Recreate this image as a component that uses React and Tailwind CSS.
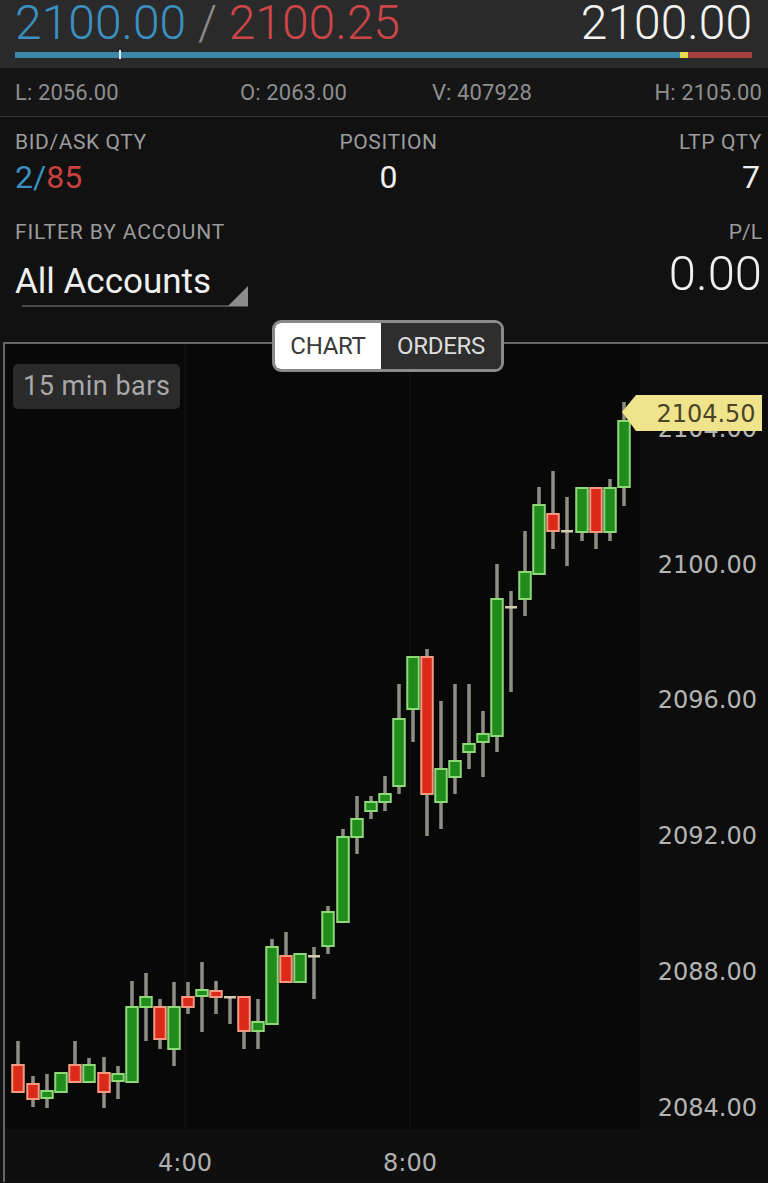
import React from "react";

// [x, bodyTop, bodyBottom, wickTop, wickBottom, type]  g = up, r = down, d = doji
const candles = [
  [18, 1066, 1093, 1042, 1093, "r"],
  [33, 1085, 1100, 1077, 1108, "r"],
  [47, 1092, 1099, 1075, 1109, "g"],
  [61, 1074, 1093, 1074, 1093, "g"],
  [75, 1066, 1083, 1042, 1083, "r"],
  [89, 1066, 1083, 1059, 1083, "g"],
  [104, 1074, 1093, 1058, 1109, "r"],
  [118, 1075, 1082, 1067, 1100, "g"],
  [132, 1008, 1083, 982, 1083, "g"],
  [146, 998, 1008, 974, 1042, "g"],
  [160, 1008, 1040, 1000, 1050, "r"],
  [174, 1008, 1050, 983, 1067, "g"],
  [188, 998, 1008, 983, 1015, "r"],
  [202, 991, 997, 963, 1033, "g"],
  [216, 992, 998, 982, 1015, "r"],
  [230, 998, 998, 997, 1025, "d"],
  [244, 998, 1032, 997, 1050, "r"],
  [258, 1023, 1032, 1000, 1050, "g"],
  [272, 948, 1025, 940, 1025, "g"],
  [286, 957, 983, 933, 983, "r"],
  [300, 955, 983, 955, 983, "g"],
  [314, 957, 957, 948, 1000, "d"],
  [328, 913, 947, 907, 955, "g"],
  [343, 838, 923, 830, 923, "g"],
  [357, 820, 838, 797, 855, "g"],
  [371, 803, 812, 797, 820, "g"],
  [385, 795, 803, 777, 812, "g"],
  [399, 720, 787, 685, 795, "g"],
  [413, 658, 710, 658, 743, "g"],
  [427, 658, 795, 650, 837, "r"],
  [441, 770, 803, 702, 830, "g"],
  [455, 762, 778, 685, 795, "g"],
  [469, 745, 753, 685, 770, "g"],
  [483, 735, 743, 712, 778, "g"],
  [497, 600, 737, 565, 753, "g"],
  [511, 608, 608, 592, 693, "d"],
  [525, 573, 600, 532, 617, "g"],
  [539, 506, 575, 488, 575, "g"],
  [553, 515, 532, 472, 550, "r"],
  [567, 532, 532, 498, 567, "d"],
  [582, 489, 533, 489, 542, "g"],
  [596, 489, 533, 489, 550, "r"],
  [610, 489, 533, 480, 542, "g"],
  [624, 422, 488, 403, 507, "g"],
];

const priceLabels = [
  ["2104.00", 429],
  ["2100.00", 565],
  ["2096.00", 700],
  ["2092.00", 836],
  ["2088.00", 972],
  ["2084.00", 1108],
];

const Candle = ({ c }) => {
  const [x, bt, bb, wt, wb, t] = c;
  return (
    <g>
      <rect x={x - 1.75} y={wt} width={3.5} height={wb - wt} fill="#8f8d84" />
      {t === "d" ? (
        <rect x={x - 6} y={bt - 1} width={12} height={2.5} fill="#d2ccae" />
      ) : (
        <rect
          x={x - 5.75}
          y={bt}
          width={11.5}
          height={Math.max(bb - bt, 6)}
          fill={t === "g" ? "#1f8c1c" : "#dc2a1a"}
          stroke={t === "g" ? "#8ed879" : "#f39a80"}
          strokeWidth={2}
        />
      )}
    </g>
  );
};

const Chart = () => (
  <svg
    width="763"
    height="838"
    viewBox="5 345 763 838"
    className="block font-['DejaVu_Sans',sans-serif]"
  >
    {/* backgrounds */}
    <rect x="5" y="345" width="635" height="785" fill="#080808" />
    <rect x="640" y="345" width="128" height="785" fill="#0d0d0d" />
    <rect x="5" y="1130" width="763" height="53" fill="#0f0f0f" />
    <line x1="185" y1="345" x2="185" y2="1130" stroke="#0e0e0e" strokeWidth="2" />
    <line x1="410" y1="345" x2="410" y2="1130" stroke="#0e0e0e" strokeWidth="2" />

    {/* price axis */}
    {priceLabels.map(([t, y]) => (
      <text key={t} x="757" y={y + 9} textAnchor="end" fontSize="24" fill="#b4b4b4">
        {t}
      </text>
    ))}

    {/* time axis */}
    <text x="185" y="1172" textAnchor="middle" fontSize="24" fill="#b0b0b0">4:00</text>
    <text x="410" y="1172" textAnchor="middle" fontSize="24" fill="#b0b0b0">8:00</text>

    {candles.map((c, i) => (
      <Candle key={i} c={c} />
    ))}

    {/* last price tag */}
    <polygon points="622,413 636,396 762,396 762,432 636,432" fill="#efe48c" />
    <text x="706" y="423" textAnchor="middle" fontSize="24" fill="#4a4428">2104.50</text>
  </svg>
);

const App = () => {
  return (
    <div className="w-[768px] h-[1183px] overflow-hidden bg-[#111111] font-['Roboto',sans-serif]">
      {/* Quote header */}
      <div className="h-[68px] bg-[#2a2a2a] pl-[15px] pr-[16px] pt-[1px]">
        <div className="flex items-end justify-between h-[50px] text-[48px] leading-[50px] font-light -mt-[3px]">
          <div>
            <span className="text-[#3a90c0]">2100.00</span>
            <span className="text-[#8a8a8a]"> / </span>
            <span className="text-[#cc4548]">2100.25</span>
          </div>
          <div className="text-[#f2f2f2]">2100.00</div>
        </div>
        <div className="relative flex h-[6px] mt-[4px]">
          <div className="w-[665px] bg-[#3b87a7]" />
          <div className="w-[8px] bg-[#e6dc4a]" />
          <div className="flex-1 bg-[#a5403e]" />
          <div className="absolute left-[104px] top-[-2px] w-[2px] h-[9px] bg-[#d8eef8]" />
        </div>
      </div>

      {/* Stats row */}
      <div className="h-[49px] bg-[#151515] pl-[15px] pr-[6px] flex items-center text-[22px] text-[#8e8e8e] tracking-[0.1px] border-b border-[#333333]">
        <div className="w-[225px]">L: 2056.00</div>
        <div className="w-[192px]">O: 2063.00</div>
        <div className="flex-1">V: 407928</div>
        <div>H: 2105.00</div>
      </div>

      {/* Position info */}
      <div className="pl-[15px] pr-[6px] pt-[13px]">
        <div className="flex justify-between text-[21px] leading-[24px] text-[#9c9c9c] tracking-[0.6px]">
          <div className="w-[240px]">BID/ASK QTY</div>
          <div className="flex-1 text-center">POSITION</div>
          <div className="w-[240px] text-right">LTP QTY</div>
        </div>
        <div className="flex justify-between text-[32px] leading-[36px] mt-[5px]">
          <div className="w-[240px]">
            <span className="text-[#3a8fbf]">2/</span>
            <span className="text-[#c8403f]">85</span>
          </div>
          <div className="flex-1 text-center text-[#eeeeee]">0</div>
          <div className="w-[240px] text-right text-[#eeeeee] pr-[2px]">7</div>
        </div>

        <div className="flex justify-between mt-[25px]">
          <div>
            <div className="text-[21px] leading-[24px] text-[#9c9c9c] tracking-[0.9px]">FILTER BY ACCOUNT</div>
            <div className="relative mt-[18px] w-[233px] h-[45px]">
              <div className="text-[35px] leading-[40px] text-[#f0f0f0]">All Accounts</div>
              <div className="absolute left-[7px] right-0 bottom-0 h-[2px] bg-[#4a4a4a]" />
              <div className="absolute right-0 bottom-[1px] w-0 h-0 border-l-[20px] border-l-transparent border-b-[20px] border-b-[#8c8c8c]" />
            </div>
          </div>
          <div className="text-right">
            <div className="text-[21px] leading-[24px] text-[#9c9c9c]">P/L</div>
            <div className="text-[49px] leading-[52px] font-light text-[#f0f0f0] mt-[4px]">0.00</div>
          </div>
        </div>
      </div>

      {/* Chart panel */}
      <div className="relative mt-[35px] ml-[3px] border-t-2 border-l-2 border-[#666666]">
        <div className="absolute left-[267px] top-[-24px] flex h-[52px] rounded-[9px] border-[3px] border-[#8a8a8a] overflow-hidden text-[24px] leading-none tracking-[-0.3px] z-10">
          <div className="w-[106px] bg-white text-[#3a3a3a] flex items-center justify-center">CHART</div>
          <div className="w-[120px] bg-[#2e2e2e] text-[#dcdcdc] flex items-center justify-center">ORDERS</div>
        </div>
        <div className="absolute left-[8px] top-[20px] h-[45px] px-[10px] rounded-[5px] bg-[#2a2a2a] text-[#a8a8a8] text-[27px] tracking-[0.5px] flex items-center z-10">
          15 min bars
        </div>
        <Chart />
      </div>
    </div>
  );
};

export default App;
